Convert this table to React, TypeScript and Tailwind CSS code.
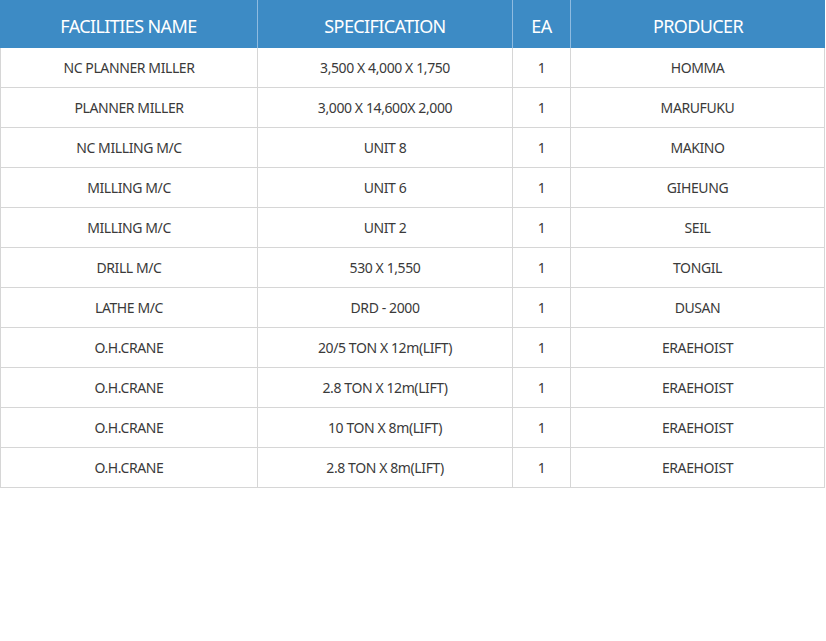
const rows: [string, string, string, string][] = [
  ["NC PLANNER MILLER", "3,500 X 4,000 X 1,750", "1", "HOMMA"],
  ["PLANNER MILLER", "3,000 X 14,600X 2,000", "1", "MARUFUKU"],
  ["NC MILLING M/C", "UNIT 8", "1", "MAKINO"],
  ["MILLING M/C", "UNIT 6", "1", "GIHEUNG"],
  ["MILLING M/C", "UNIT 2", "1", "SEIL"],
  ["DRILL M/C", "530 X 1,550", "1", "TONGIL"],
  ["LATHE M/C", "DRD - 2000", "1", "DUSAN"],
  ["O.H.CRANE", "20/5 TON X 12m(LIFT)", "1", "ERAEHOIST"],
  ["O.H.CRANE", "2.8 TON X 12m(LIFT)", "1", "ERAEHOIST"],
  ["O.H.CRANE", "10 TON X 8m(LIFT)", "1", "ERAEHOIST"],
  ["O.H.CRANE", "2.8 TON X 8m(LIFT)", "1", "ERAEHOIST"],
];

const headers = ["FACILITIES NAME", "SPECIFICATION", "EA", "PRODUCER"];
const widths = ["w-[258px]", "w-[255px]", "w-[58px]", "w-[254px]"];

export default function App() {
  return (
    <div className="min-h-screen bg-white font-['Noto_Sans',sans-serif]">
      <div className="w-[825px]">
        <div className="flex h-12 bg-[#3d8bc5] text-white text-[18px] tracking-[-0.6px]">
          {headers.map((h, i) => (
            <div
              key={h}
              className={`${widths[i]} flex items-center justify-center pt-1 ${
                i < 3 ? "border-r border-[#8fbbe0]" : ""
              }`}
            >
              {h}
            </div>
          ))}
        </div>
        <div className="border-l border-[#d6d6d6]">
          {rows.map((r, ri) => (
            <div key={ri} className="flex h-10 border-b border-[#d6d6d6] text-[14px] text-[#3a3a3a] tracking-[-0.4px]">
              {r.map((c, i) => (
                <div
                  key={i}
                  className={`${i === 0 ? "w-[257px]" : widths[i]} flex items-center justify-center pb-px border-r border-[#d6d6d6]`}
                >
                  {c}
                </div>
              ))}
            </div>
          ))}
        </div>
      </div>
    </div>
  );
}
